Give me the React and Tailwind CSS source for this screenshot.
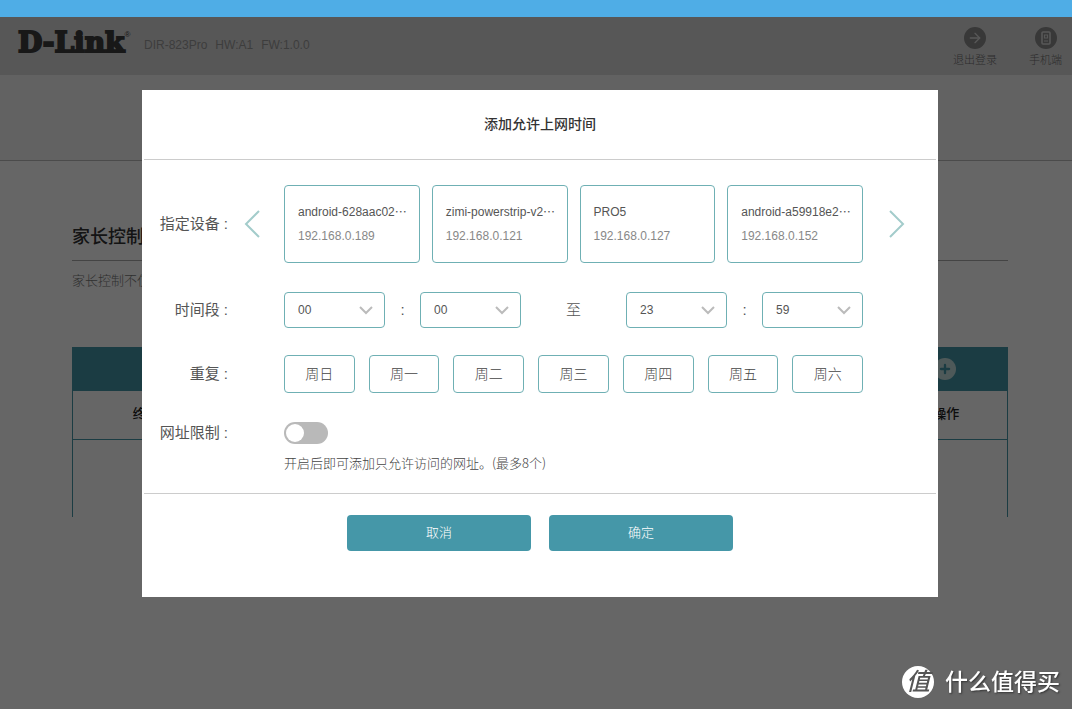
import { useState } from 'react'
import { ArrowRight, Plus } from 'lucide-react'

const DEVICES = [
  { name: 'android-628aac02', cut: true, ip: '192.168.0.189' },
  { name: 'zimi-powerstrip-v2', cut: true, ip: '192.168.0.121' },
  { name: 'PRO5', cut: false, ip: '192.168.0.127' },
  { name: 'android-a59918e2', cut: true, ip: '192.168.0.152' },
]

const DAYS = ['周日', '周一', '周二', '周三', '周四', '周五', '周六']

const pad = (n) => String(n).padStart(2, '0')
const HOURS = Array.from({ length: 24 }, (_, i) => pad(i))
const MINUTES = Array.from({ length: 60 }, (_, i) => pad(i))

function Header() {
  return (
    <header className="flex h-[58px] items-start justify-between bg-[#dadada] pl-[18px] pr-[10px]">
      <div className="flex items-start pt-[10px]">
        <div className="flex w-[126px] items-start text-[#3c3c3c]">
          <span className="font-['DejaVu_Serif',serif] text-[28px] leading-8 font-bold [-webkit-text-stroke:2px_currentColor]">
            D-Link
          </span>
          <span className="text-[8px] leading-4">®</span>
        </div>
        <p className="flex gap-2 pt-[10px] text-xs leading-4 text-[#999]">
          <span>DIR-823Pro</span>
          <span>HW:A1</span>
          <span>FW:1.0.0</span>
        </p>
      </div>
      <nav className="flex gap-8 pt-[10px] text-[11px] leading-4 font-light text-[#6e6e6e]">
        <a href="#logout" className="flex flex-col items-center gap-[3px]">
          <span className="flex size-[22px] items-center justify-center rounded-full bg-[#8c8c8c] text-[#dadada]">
            <ArrowRight size={16} strokeWidth={2} />
          </span>
          退出登录
        </a>
        <a href="#mobile" className="flex flex-col items-center gap-[3px]">
          <span className="flex size-[22px] items-center justify-center rounded-full bg-[#8c8c8c] text-[#dadada]">
            <svg width="10" height="14" viewBox="0 0 10 14" fill="none" stroke="currentColor" strokeWidth="1.6">
              <rect x="1" y="1" width="8" height="12" rx="1" />
              <path d="M3.5 4h3v3h-3zM3 10h4" strokeWidth="1.2" />
            </svg>
          </span>
          手机端
        </a>
      </nav>
    </header>
  )
}

function ParentalControl() {
  return (
    <main className="pl-2">
      <div className="mx-auto max-w-[936px] pt-[63px]">
        <h1 className="border-b border-[#aaa] pb-[9px] text-lg leading-[27px] font-medium text-[#333]">
          家长控制
        </h1>
        <p className="pt-[10px] text-[13px] leading-5 font-light text-[#777]">家长控制不仅</p>
        <div className="mt-14 flex h-[43px] items-center justify-end bg-[#4597a8]">
          <div className="flex w-[126px] justify-center">
            <button
              type="button"
              aria-label="添加"
              className="flex size-[22px] items-center justify-center rounded-full bg-[#c4dfde] text-[#4597a8]"
            >
              <Plus size={14} strokeWidth={4} />
            </button>
          </div>
        </div>
        <table className="w-full table-fixed border-collapse border border-[#4597a8] border-b-transparent text-[13px] text-[#222]">
          <thead>
            <tr className="h-[49px] border-b border-[#4597a8]">
              <th className="w-[172px] pb-[2px] font-medium">终端设备</th>
              <th />
              <th className="w-[122px] pb-[2px] font-medium">操作</th>
            </tr>
          </thead>
          <tbody>
            <tr className="h-[77px]">
              <td />
              <td />
              <td />
            </tr>
          </tbody>
        </table>
      </div>
    </main>
  )
}

function PageArrow({ label, d }) {
  return (
    <button type="button" aria-label={label} className="text-[#a3cccb]">
      <svg width="16" height="28" viewBox="0 0 16 28" fill="none" stroke="currentColor" strokeWidth="2">
        <path d={d} />
      </svg>
    </button>
  )
}

function TimeSelect({ label, options, value, onChange }) {
  return (
    <div className="relative flex-1">
      <select
        aria-label={label}
        value={value}
        onChange={(e) => onChange(e.target.value)}
        className="block h-9 w-full appearance-none rounded border border-[#6fb0b4] bg-white px-[13px] text-xs text-[#555]"
      >
        {options.map((o) => (
          <option key={o}>{o}</option>
        ))}
      </select>
      <svg
        className="pointer-events-none absolute top-[14px] right-3"
        width="14"
        height="9"
        viewBox="0 0 14 9"
        fill="none"
        stroke="#bbb"
        strokeWidth="2"
      >
        <path d="M1 1l6 6 6-6" />
      </svg>
    </div>
  )
}

function Row({ label, htmlFor, before, after, children }) {
  const Label = htmlFor ? 'label' : 'span'
  return (
    <div className="flex items-center">
      <Label htmlFor={htmlFor} className="w-[86px] shrink-0 text-right text-[15px] leading-5 whitespace-nowrap text-[#555]">
        {label} :
      </Label>
      <div className="flex w-14 shrink-0 justify-center pr-2">{before}</div>
      <div className="min-w-0 flex-1">{children}</div>
      <div className="flex w-[75px] shrink-0 pl-[26px]">{after}</div>
    </div>
  )
}

function AddTimeDialog() {
  const [picked, setPicked] = useState([])
  const [days, setDays] = useState([])
  const [limited, setLimited] = useState(false)
  const [time, setTime] = useState({ h1: '00', m1: '00', h2: '23', m2: '59' })

  const toggle = (list, item) =>
    list.includes(item) ? list.filter((i) => i !== item) : [...list, item]
  const setPart = (key) => (value) => setTime({ ...time, [key]: value })

  return (
    <section
      role="dialog"
      aria-labelledby="dialog-title"
      className="w-full max-w-[796px] self-start bg-white px-0.5 pb-[46px]"
    >
      <h2
        id="dialog-title"
        className="border-b border-[#ccc] py-6 text-center text-[14px] leading-[21px] font-medium text-[#333]"
      >
        添加允许上网时间
      </h2>

      <div className="-mx-0.5 pt-[25px] pb-5">
        <Row
          label="指定设备"
          before={<PageArrow label="上一页" d="M15 1L2 14l13 13" />}
          after={<PageArrow label="下一页" d="M1 1l13 13L1 27" />}
        >
          <div className="grid grid-cols-4 gap-3">
            {DEVICES.map((d) => (
              <button
                key={d.ip}
                type="button"
                aria-pressed={picked.includes(d.ip)}
                onClick={() => setPicked(toggle(picked, d.ip))}
                className="flex h-[78px] flex-col justify-center rounded border border-[#6fb0b4] px-[13px] text-left text-xs leading-6 aria-pressed:bg-[#e6f3f4]"
              >
                <span className="flex whitespace-nowrap text-[#555]">
                  {d.name}
                  {d.cut && <span className="font-['Noto_Sans_CJK_SC',sans-serif]">⋯</span>}
                </span>
                <span className="text-[#888]">{d.ip}</span>
              </button>
            ))}
          </div>
        </Row>

        <div className="mt-[29px]">
          <Row label="时间段">
            <div className="flex items-center text-[15px] font-light text-[#555]">
              <TimeSelect label="开始小时" options={HOURS} value={time.h1} onChange={setPart('h1')} />
              <span className="w-[35px] text-center">:</span>
              <TimeSelect label="开始分钟" options={MINUTES} value={time.m1} onChange={setPart('m1')} />
              <span className="w-[105px] text-center">至</span>
              <TimeSelect label="结束小时" options={HOURS} value={time.h2} onChange={setPart('h2')} />
              <span className="w-[35px] text-center">:</span>
              <TimeSelect label="结束分钟" options={MINUTES} value={time.m2} onChange={setPart('m2')} />
            </div>
          </Row>
        </div>

        <div className="mt-[27px]">
          <Row label="重复">
            <div className="grid grid-cols-7 gap-[14px]">
              {DAYS.map((day) => (
                <button
                  key={day}
                  type="button"
                  aria-pressed={days.includes(day)}
                  onClick={() => setDays(toggle(days, day))}
                  className="h-[38px] rounded border border-[#6fb0b4] text-[14px] font-light text-[#444] aria-pressed:bg-[#e6f3f4]"
                >
                  {day}
                </button>
              ))}
            </div>
          </Row>
        </div>

        <div className="mt-[29px]">
          <Row label="网址限制" htmlFor="url-limit">
            <input
              id="url-limit"
              type="checkbox"
              role="switch"
              checked={limited}
              onChange={(e) => setLimited(e.target.checked)}
              className="block h-[22px] w-11 appearance-none rounded-full bg-[#b9b9b9] p-0.5 before:block before:size-[18px] before:rounded-full before:bg-white checked:bg-[#4597a8] checked:before:ml-auto"
            />
          </Row>
          <p className="pt-[9px] pl-[142px] font-['Noto_Sans_CJK_SC',sans-serif] text-[13px] leading-5 font-light text-[#444]">
            开启后即可添加只允许访问的网址。(最多8个)
          </p>
        </div>
      </div>

      <div className="flex justify-center gap-[18px] border-t border-[#ccc] pt-[21px]">
        <button type="button" className="h-9 w-[184px] rounded bg-[#4597a8] text-[13px] font-light text-white">
          取消
        </button>
        <button type="button" className="h-9 w-[184px] rounded bg-[#4597a8] text-[13px] font-light text-white">
          确定
        </button>
      </div>
    </section>
  )
}

function Watermark() {
  return (
    <div className="fixed right-3 bottom-[11px] flex items-center gap-[11px] text-white">
      <span className="flex size-8 items-center justify-center rounded-full bg-white text-2xl leading-8 font-medium text-[#555] italic">
        值
      </span>
      <span className="text-[23px] leading-8 font-medium [text-shadow:1px_1px_2px_#333]">什么值得买</span>
    </div>
  )
}

function App() {
  return (
    <div
      lang="zh-CN"
      className="min-h-screen bg-white font-['Liberation_Sans','Noto_Sans_CJK_SC',sans-serif]"
    >
      <div className="h-[17px] bg-[#4fade6]" />
      <Header />
      <div className="h-[86px] border-b border-[#bbb] bg-[#f6f6f6]" />
      <ParentalControl />
      <div className="fixed inset-x-0 top-[17px] bottom-0 flex justify-center overflow-auto bg-black/60 pt-[73px] pl-2">
        <AddTimeDialog />
      </div>
      <Watermark />
    </div>
  )
}

export default App
